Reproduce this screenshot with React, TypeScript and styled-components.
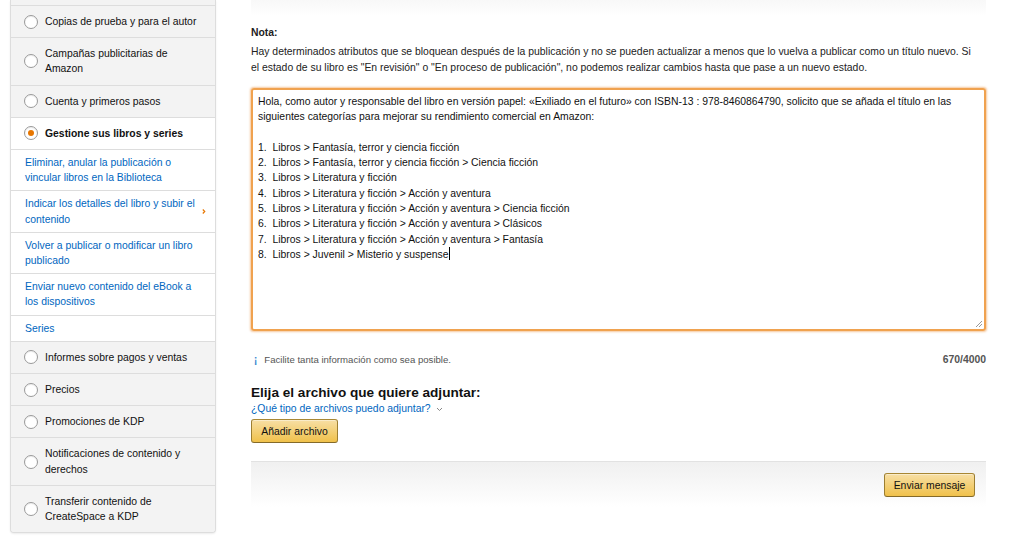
import React from 'react';
import styled, { createGlobalStyle } from 'styled-components';

const GlobalStyle = createGlobalStyle`
  html, body {
    margin: 0;
    background: #fff;
  }
  body {
    font-family: "Liberation Sans", Arial, sans-serif;
    font-size: 10.4px;
    line-height: 15.2px;
    color: #111;
  }
`;

const Page = styled.div`
  display: flex;
  align-items: flex-start;
  height: 555px;
  overflow: hidden;
`;

const Sidebar = styled.nav`
  margin-left: 10px;
  width: 206px;
  flex: none;
  box-sizing: border-box;
  border: 1px solid #ddd;
  border-top: none;
  border-radius: 0 0 4px 4px;
  box-shadow: 0 1px 2px rgba(0, 0, 0, 0.08);
  background: #f3f3f3;
  overflow: hidden;
`;

const Stub = styled.div`
  height: 5px;
  border-bottom: 1px solid #ddd;
`;

const NavItem = styled.div<{ $active?: boolean }>`
  display: flex;
  align-items: center;
  gap: 7px;
  padding: 8px 10px 8px 13px;
  border-bottom: 1px solid #ddd;
  background: ${(p) => (p.$active ? '#fff' : '#f3f3f3')};
  font-weight: ${(p) => (p.$active ? 'bold' : 'normal')};
  color: #111;

  &:last-child {
    border-bottom: none;
  }
`;

const SubItem = styled.a`
  display: flex;
  align-items: center;
  justify-content: space-between;
  gap: 6px;
  padding: 5px 9px 5px 14px;
  border-bottom: 1px solid #ddd;
  background: #fff;
  color: #0066c0;
  text-decoration: none;
`;

const Radio = styled.span<{ $checked?: boolean }>`
  flex: none;
  width: 14px;
  height: 14px;
  box-sizing: border-box;
  border: 1px solid #9a9a9a;
  border-radius: 50%;
  background: #fff;
  display: flex;
  align-items: center;
  justify-content: center;
  box-shadow: inset 0 1px 1px rgba(0, 0, 0, 0.08);

  &::after {
    content: '';
    display: ${(p) => (p.$checked ? 'block' : 'none')};
    width: 6px;
    height: 6px;
    border-radius: 50%;
    background: #e77600;
  }
`;

const Main = styled.main`
  margin-left: 35px;
  width: 735px;
  flex: none;
  padding-top: 25px;
  background: linear-gradient(#f8f8f8, #fff) no-repeat top / 100% 16px;
`;

const NoteTitle = styled.div`
  font-weight: bold;
  line-height: 16px;
  color: #222;
`;

const NoteText = styled.p`
  margin: 3px 0 0;
  line-height: 16px;
  color: #222;
  white-space: nowrap;
`;

const TextBox = styled.div`
  position: relative;
  margin-top: 12px;
  height: 243px;
  box-sizing: border-box;
  padding: 4px 5px;
  border: 2px solid #f0a24f;
  border-radius: 3px;
  box-shadow: 0 0 2px 0.5px rgba(233, 133, 40, 0.45);
  white-space: pre;
  line-height: 15.3px;
  color: #111;
  overflow: hidden;
`;

const Caret = styled.span`
  display: inline-block;
  width: 1px;
  height: 13px;
  background: #000;
  vertical-align: -2px;
`;

const Grip = styled.svg`
  position: absolute;
  right: 1px;
  bottom: 1px;
`;

const HintRow = styled.div`
  display: flex;
  align-items: center;
  justify-content: space-between;
  margin-top: 21px;
`;

const Hint = styled.span`
  display: flex;
  align-items: center;
  gap: 7px;
  padding-left: 3px;
  font-size: 9.6px;
  color: #555;
`;

const InfoMark = styled.span`
  font-size: 10px;
  font-weight: bold;
  color: #3b89cf;
  transform: rotate(180deg) translateY(-1px);
  display: inline-block;
`;

const Counter = styled.span`
  font-weight: bold;
  color: #555;
`;

const Heading = styled.h3`
  margin: 17px 0 0;
  font-size: 13.6px;
  line-height: 18px;
  font-weight: bold;
  color: #111;
`;

const HelpLink = styled.a`
  display: flex;
  align-items: center;
  gap: 5px;
  line-height: 14px;
  color: #0066c0;
  text-decoration: none;
`;

const YellowButton = styled.button`
  height: 24px;
  padding: 0 9px;
  border: 1px solid;
  border-color: #a88734 #9c7e31 #846a29;
  border-radius: 3px;
  background: linear-gradient(to bottom, #f7dfa5, #f0c14b);
  box-shadow: inset 0 1px 0 rgba(255, 255, 255, 0.4);
  font-family: inherit;
  font-size: 10.4px;
  color: #111;
  white-space: nowrap;
`;

const AttachButton = styled(YellowButton)`
  margin-top: 3px;
  width: 87px;
`;

const Footer = styled.div`
  margin-top: 18px;
  display: flex;
  justify-content: flex-end;
  padding: 11px 11px 10px;
  border-top: 1px solid #e2e2e2;
  background: linear-gradient(#f0f0f0, #fff);
`;

const SendButton = styled(YellowButton)`
  width: 91px;
  padding: 0;
`;

const radioItems1 = [
  'Copias de prueba y para el autor',
  'Campañas publicitarias de\nAmazon',
  'Cuenta y primeros pasos',
];

const subItems = [
  'Eliminar, anular la publicación o vincular libros en la Biblioteca',
  'Indicar los detalles del libro y subir el contenido',
  'Volver a publicar o modificar un libro publicado',
  'Enviar nuevo contenido del eBook a los dispositivos',
  'Series',
];

const radioItems2 = [
  'Informes sobre pagos y ventas',
  'Precios',
  'Promociones de KDP',
  'Notificaciones de contenido y derechos',
  'Transferir contenido de CreateSpace a KDP',
];

const message = [
  'Hola, como autor y responsable del libro en versión papel: «Exiliado en el futuro» con ISBN-13 : 978-8460864790, solicito que se añada el título en las',
  'siguientes categorías para mejorar su rendimiento comercial en Amazon:',
  '',
  '1.  Libros > Fantasía, terror y ciencia ficción',
  '2.  Libros > Fantasía, terror y ciencia ficción > Ciencia ficción',
  '3.  Libros > Literatura y ficción',
  '4.  Libros > Literatura y ficción > Acción y aventura',
  '5.  Libros > Literatura y ficción > Acción y aventura > Ciencia ficción',
  '6.  Libros > Literatura y ficción > Acción y aventura > Clásicos',
  '7.  Libros > Literatura y ficción > Acción y aventura > Fantasía',
].join('\n');

const Chevron = ({ dir, color }: { dir: 'right' | 'down'; color: string }) =>
  dir === 'right' ? (
    <svg width="5" height="7" viewBox="0 0 5 7">
      <path d="M1 1l2.5 2.5L1 6" fill="none" stroke={color} strokeWidth="1.5" />
    </svg>
  ) : (
    <svg width="7" height="5" viewBox="0 0 7 5">
      <path d="M1 1l2.5 2.5L6 1" fill="none" stroke={color} strokeWidth="1" />
    </svg>
  );

export default function App(): React.ReactElement {
  return (
    <>
      <GlobalStyle />
      <Page>
        <Sidebar>
          <Stub />
          {radioItems1.map((t) => (
            <NavItem key={t}>
              <Radio />
              <span style={{ whiteSpace: 'pre-line' }}>{t}</span>
            </NavItem>
          ))}
          <NavItem $active>
            <Radio $checked />
            <span>Gestione sus libros y series</span>
          </NavItem>
          {subItems.map((t, i) => (
            <SubItem key={t} href="#">
              <span>{t}</span>
              {i === 1 && <Chevron dir="right" color="#e77600" />}
            </SubItem>
          ))}
          {radioItems2.map((t) => (
            <NavItem key={t}>
              <Radio />
              <span>{t}</span>
            </NavItem>
          ))}
        </Sidebar>

        <Main>
          <NoteTitle>Nota:</NoteTitle>
          <NoteText>
            Hay determinados atributos que se bloquean después de la publicación y no se pueden actualizar a menos que lo vuelva a publicar como un título nuevo. Si
            <br />
            el estado de su libro es "En revisión" o "En proceso de publicación", no podemos realizar cambios hasta que pase a un nuevo estado.
          </NoteText>

          <TextBox>
            {message}
            {'\n8.  Libros > Juvenil > Misterio y suspense'}
            <Caret />
            <Grip width="8" height="8" viewBox="0 0 8 8">
              <path d="M7 1L1 7M7 4L4 7" stroke="#999" strokeWidth="1" />
            </Grip>
          </TextBox>

          <HintRow>
            <Hint>
              <InfoMark>!</InfoMark>
              Facilite tanta información como sea posible.
            </Hint>
            <Counter>670/4000</Counter>
          </HintRow>

          <Heading>Elija el archivo que quiere adjuntar:</Heading>
          <HelpLink href="#">
            ¿Qué tipo de archivos puedo adjuntar?
            <Chevron dir="down" color="#888" />
          </HelpLink>
          <AttachButton>Añadir archivo</AttachButton>

          <Footer>
            <SendButton>Enviar mensaje</SendButton>
          </Footer>
        </Main>
      </Page>
    </>
  );
}
